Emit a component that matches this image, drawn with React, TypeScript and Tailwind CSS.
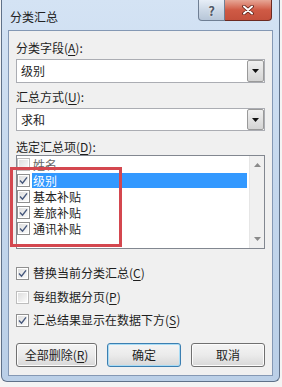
import React from 'react';

const Check: React.FC<{ checked?: boolean; faded?: boolean }> = ({ checked, faded }) => (
  <div className={`w-[13px] h-[13px] shrink-0 border ${faded ? 'border-[#bdbdbd]' : 'border-[#8f8f8f]'} bg-white p-[1px]`}>
    <div className="w-full h-full bg-gradient-to-br from-[#dedede] to-[#fafafa] flex items-center justify-center">
      {checked && (
        <svg width="9" height="9" viewBox="0 0 9 9">
          <path d="M1 4.6 L3.5 7.2 L8 1.3" fill="none" stroke="#46587c" strokeWidth="1.4" />
        </svg>
      )}
    </div>
  </div>
);

const Mn: React.FC<{ k: string }> = ({ k }) => <span className="underline underline-offset-2">{k}</span>;

const Combo: React.FC<{ value: string; h: string }> = ({ value, h }) => (
  <div className={`${h} border border-[#abadb3] bg-white flex items-center`}>
    <span className="pl-[4px] flex-1">{value}</span>
    <div className="w-[17px] h-full border border-[#9a9a9a] rounded-[2px] bg-gradient-to-b from-[#f0f0f0] to-[#d4d4d4] flex items-center justify-center">
      <svg width="7" height="4" viewBox="0 0 7 4"><path d="M0 0 H7 L3.5 4 Z" fill="#111" /></svg>
    </div>
  </div>
);

const Btn: React.FC<{ w: string; main?: boolean; children: React.ReactNode }> = ({ w, main, children }) => (
  <div
    className={`${w} h-[24px] rounded-[3px] border ${main ? 'border-[#3c7fb1] shadow-[inset_0_0_0_1px_#a9dcf5]' : 'border-[#707070] shadow-[inset_0_0_0_1px_#fcfcfc]'} bg-gradient-to-b from-[#f4f4f4] via-[#ebebeb] to-[#d8d8d8] flex items-center justify-center`}
  >
    {children}
  </div>
);

export default function App() {
  return (
    <div className="w-[282px] h-[387px] bg-[#f4f4f4] relative overflow-hidden text-[12px] text-[#1e1e1e] font-['Noto_Sans_CJK_SC','Noto_Sans',sans-serif]">
      {/* window frame */}
      <div className="ml-[1px] w-[279px] h-[382px] border-x border-b border-[#5f7189] rounded-b-[6px] bg-gradient-to-b from-[#d4e3f4] via-[#c4d7ed] to-[#bacfe7] flex flex-col px-[6px] pb-[5px]">
        <div className="h-[30px] flex shrink-0">
          <span className="mt-[9px] ml-[2px] leading-[16px] text-[12px] text-[#222]">分类汇总</span>
          <div className="ml-auto mr-[1px] flex h-[21px]">
            <div className="w-[27px] h-full border border-[#6f7f94] border-t-0 rounded-bl-[4px] bg-gradient-to-b from-[#e7eef7] via-[#ccd8e6] to-[#b7c6d8] flex items-center justify-center">
              <span className="text-[13px] font-bold leading-none text-[#4f5866] [text-shadow:0_0_2px_#ffffff]">?</span>
            </div>
            <div className="w-[47px] h-full border border-[#6b2a22] border-t-0 border-l-0 rounded-br-[4px] bg-gradient-to-b from-[#e6a696] via-[#cf5a45] to-[#c4503c] flex items-center justify-center">
              <svg width="12" height="10" viewBox="0 0 12 10">
                <path d="M2 1.5 L10 8.5 M10 1.5 L2 8.5" stroke="#5a1f17" strokeWidth="3.6" strokeLinecap="round" />
                <path d="M2 1.5 L10 8.5 M10 1.5 L2 8.5" stroke="#ffffff" strokeWidth="2" strokeLinecap="round" />
              </svg>
            </div>
          </div>
        </div>

        {/* client area */}
        <div className="flex-1 border border-[#8498b4] bg-[#f0f0f0] px-[7px] pt-[9px] flex flex-col">
          <div className="h-[16px] leading-[16px]">分类字段(<Mn k="A" />):</div>
          <div className="mt-[3px]"><Combo value="级别" h="h-[24px]" /></div>
          <div className="mt-[6px] h-[16px] leading-[16px]">汇总方式(<Mn k="U" />):</div>
          <div className="mt-[3px]"><Combo value="求和" h="h-[23px]" /></div>
          <div className="mt-[8px] h-[16px] leading-[16px]">选定汇总项(<Mn k="D" />):</div>

          <div className="h-[94px] border border-[#828790] bg-white flex overflow-hidden">
            <div className="flex-1 flex flex-col">
              {[
                { t: '姓名', c: false },
                { t: '级别', c: true, sel: true },
                { t: '基本补贴', c: true },
                { t: '差旅补贴', c: true },
                { t: '通讯补贴', c: true },
              ].map((r) => (
                <div key={r.t} className="h-[16px] flex items-center">
                  <Check checked={r.c} faded={!r.c} />
                  <div className={`ml-[2px] mr-[2px] flex-1 h-[15px] leading-[15px] pl-[1px] ${r.sel ? 'bg-[#3399ff] text-white' : ''} ${r.c ? '' : 'text-[#666]'}`}>
                    {r.t}
                  </div>
                </div>
              ))}
            </div>
            <div className="w-[15px] bg-[#f0f0f0] border-l border-[#e6e6e6] flex flex-col justify-between items-center py-[7px]">
              <svg width="7" height="4" viewBox="0 0 7 4"><path d="M0 4 H7 L3.5 0 Z" fill="#8a8a8a" /></svg>
              <svg width="7" height="4" viewBox="0 0 7 4"><path d="M0 0 H7 L3.5 4 Z" fill="#8a8a8a" /></svg>
            </div>
          </div>

          <div className="mt-[16px] h-[16px] flex items-center gap-[4px]">
            <Check checked />
            <span>替换当前分类汇总(<Mn k="C" />)</span>
          </div>
          <div className="mt-[8px] h-[16px] flex items-center gap-[4px]">
            <Check faded />
            <span>每组数据分页(<Mn k="P" />)</span>
          </div>
          <div className="mt-[7px] h-[16px] flex items-center gap-[4px]">
            <Check checked />
            <span>汇总结果显示在数据下方(<Mn k="S" />)</span>
          </div>

          <div className="mt-[15px] flex justify-between">
            <Btn w="w-[81px]">全部删除(<Mn k="R" />)</Btn>
            <Btn w="w-[74px]" main>确定</Btn>
            <Btn w="w-[74px]">取消</Btn>
          </div>
        </div>
      </div>

      {/* red highlight box drawn over the list */}
      <div className="absolute left-[10px] top-[167px] w-[112px] h-[80px] border-[3px] border-[#d4474f]" />
    </div>
  );
}
